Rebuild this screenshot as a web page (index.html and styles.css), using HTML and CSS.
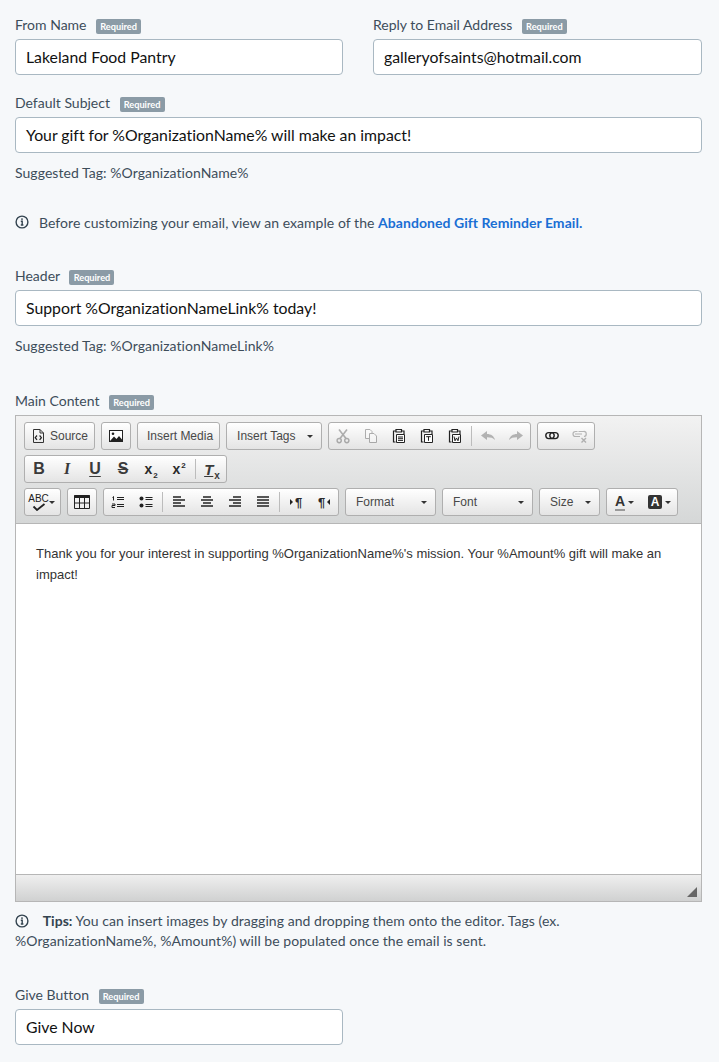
FILE: index.html
```html
<!DOCTYPE html>
<html lang="en">
<head>
    <meta charset="UTF-8">
    <meta name="viewport" content="width=device-width, initial-scale=1.0">
    <title>Abandoned Gift Reminder Email</title>
    <link rel="stylesheet" href="styles.css">
</head>
<body>
    <form class="email-form">
        <div class="form-row">
            <div class="form-group">
                <div class="field-label">From Name <span class="badge">Required</span></div>
                <div class="text-input">Lakeland Food Pantry</div>
            </div>
            <div class="form-group">
                <div class="field-label">Reply to Email Address <span class="badge">Required</span></div>
                <div class="text-input">galleryofsaints@hotmail.com</div>
            </div>
        </div>

        <div class="form-group subject-group">
            <div class="field-label">Default Subject <span class="badge">Required</span></div>
            <div class="text-input">Your gift for %OrganizationName% will make an impact!</div>
            <p class="hint">Suggested Tag: %OrganizationName%</p>
        </div>

        <p class="info-line">
            <svg class="info-icon" viewBox="0 0 14 14"><circle cx="7" cy="7" r="5.9"/><path d="M5.8 6.2H7.2V10M5.8 10H8.4"/><circle class="dot" cx="7" cy="4.1" r="0.9"/></svg>
            <span>Before customizing your email, view an example of the <a href="#">Abandoned Gift Reminder Email.</a></span>
        </p>

        <div class="form-group header-group">
            <div class="field-label">Header <span class="badge">Required</span></div>
            <div class="text-input">Support %OrganizationNameLink% today!</div>
            <p class="hint">Suggested Tag: %OrganizationNameLink%</p>
        </div>

        <div class="form-group content-group">
            <div class="field-label">Main Content <span class="badge">Required</span></div>
            <div class="editor">
                <div class="toolbar">
                    <div class="tool-row">
                        <div class="tool-group"><button type="button" class="tool text-tool source-tool">
                            <svg class="ico" viewBox="0 0 16 16"><path d="M3.5 1.5H10L13.5 5V14.5H3.5Z M10 1.5V5H13.5" fill="none" stroke="#333"/><path d="M7 7.5L5.2 9.7L7 11.9M9.6 7.5L11.4 9.7L9.6 11.9" fill="none" stroke="#222" stroke-width="1.2"/></svg>
                            Source</button></div>
                        <div class="tool-group"><button type="button" class="tool">
                            <svg class="ico" viewBox="0 0 16 16"><rect x="1.5" y="2.5" width="13" height="11" fill="#fff" stroke="#222"/><circle cx="5" cy="5.8" r="1.3" fill="#222"/><path d="M2 13L6 8.5L8.5 11L11 8L14 11.5V13Z" fill="#222"/></svg>
                        </button></div>
                        <div class="tool-group"><button type="button" class="tool text-tool wide-tool">Insert Media</button></div>
                        <div class="tool-group"><button type="button" class="tool combo tags-combo">Insert Tags <i class="caret"></i></button></div>
                        <div class="tool-group">
                            <button type="button" class="tool off"><svg class="ico" viewBox="0 0 16 16"><path d="M4 1.5L11 10.5M12 1.5L5 10.5" fill="none" stroke="#444" stroke-width="1.6"/><circle cx="4.2" cy="12.6" r="2.1" fill="none" stroke="#444" stroke-width="1.4"/><circle cx="11.8" cy="12.6" r="2.1" fill="none" stroke="#444" stroke-width="1.4"/></svg></button>
                            <button type="button" class="tool off"><svg class="ico" viewBox="0 0 16 16"><path d="M2.5 1.5H7L9 3.5V10.5H2.5Z" fill="#fff" stroke="#444"/><path d="M6.5 5.5H11L13.5 8V14.5H6.5Z" fill="#fff" stroke="#444"/></svg></button>
                            <button type="button" class="tool"><svg class="ico" viewBox="0 0 16 16"><use href="#clip"/><path d="M5.5 6.5H13.5V14.5H5.5Z M7 9H12M7 10.7H12M7 12.4H12" fill="#fff" stroke="#222"/></svg></button>
                            <button type="button" class="tool"><svg class="ico" viewBox="0 0 16 16"><use href="#clip"/><path d="M5.5 6.5H13.5V14.5H5.5Z M7.2 8.7H11.8M9.5 8.7V12.8" fill="#fff" stroke="#222"/></svg></button>
                            <button type="button" class="tool"><svg class="ico" viewBox="0 0 16 16"><use href="#clip"/><path d="M5.5 6.5H13.5V14.5H5.5Z M7 8.5L8 12.8L9.5 10L11 12.8L12 8.5" fill="#fff" stroke="#222"/></svg></button>
                            <i class="sep"></i>
                            <button type="button" class="tool off"><svg class="ico" viewBox="0 0 16 16"><path d="M1 7.5L7 3V6C11 6 14 8 15 12C13 10 11 9.3 7 9.3V12Z" fill="#555"/></svg></button>
                            <button type="button" class="tool off"><svg class="ico" viewBox="0 0 16 16"><path d="M15 7.5L9 3V6C5 6 2 8 1 12C3 10 5 9.3 9 9.3V12Z" fill="#555"/></svg></button>
                        </div>
                        <div class="tool-group">
                            <button type="button" class="tool"><svg class="ico" viewBox="0 0 16 16"><rect x="1.8" y="4.6" width="8.4" height="6" rx="3" fill="none" stroke="#222" stroke-width="1.4"/><rect x="5.8" y="4.6" width="8.4" height="6" rx="3" fill="none" stroke="#222" stroke-width="1.4"/></svg></button>
                            <button type="button" class="tool off"><svg class="ico" viewBox="0 0 16 16"><path d="M5.5 3.5H3.5A2.5 2.5 0 0 0 3.5 8.5H8M12 8.5A2.5 2.5 0 0 0 11.5 3.5H6.5M3 6H10" fill="none" stroke="#555" stroke-width="1.2"/><path d="M9.5 10L14 14.5M14 10L9.5 14.5" stroke="#555" stroke-width="1.4"/></svg></button>
                        </div>
                    </div>
                    <div class="tool-row">
                        <div class="tool-group">
                            <button type="button" class="tool glyph bold">B</button>
                            <button type="button" class="tool glyph italic">I</button>
                            <button type="button" class="tool glyph under">U</button>
                            <button type="button" class="tool glyph strike">S</button>
                            <button type="button" class="tool glyph script"><span>x<sub>2</sub></span></button>
                            <button type="button" class="tool glyph script"><span>x<sup>2</sup></span></button>
                            <i class="sep"></i>
                            <button type="button" class="tool glyph clear-format"><span><u>T</u><sub>x</sub></span></button>
                        </div>
                    </div>
                    <div class="tool-row">
                        <div class="tool-group"><button type="button" class="tool spell-tool">
                            <span class="spell-icon"><span class="abc">ABC</span><svg class="check" viewBox="0 0 14 8"><path d="M1.5 3.5L5 7L12.5 1" fill="none" stroke="#222" stroke-width="1.8"/></svg></span><i class="caret"></i>
                        </button></div>
                        <div class="tool-group"><button type="button" class="tool"><svg class="ico" viewBox="0 0 16 16"><path d="M0.5 1H15.5V4H0.5Z" fill="#222"/><path d="M0.5 1.5H15.5V14.5H0.5Z M0.5 9H15.5M5.5 4V14.5M10.5 4V14.5" fill="none" stroke="#222"/></svg></button></div>
                        <div class="tool-group">
                            <button type="button" class="tool"><svg class="ico" viewBox="0 0 16 16"><path d="M7 3.5H14M7 5.5H14M7 10.5H14M7 12.5H14" stroke="#222"/><path d="M3.5 2.5V6.5M2.5 3.5L3.5 2.5M2 10H5V11.5H2V13.5H5" fill="none" stroke="#222"/></svg></button>
                            <button type="button" class="tool"><svg class="ico" viewBox="0 0 16 16"><circle cx="3.5" cy="4.5" r="2" fill="#222"/><circle cx="3.5" cy="11.5" r="2" fill="#222"/><path d="M7.5 3.5H14.5M7.5 5.5H14.5M7.5 10.5H14.5M7.5 12.5H14.5" stroke="#222"/></svg></button>
                            <i class="sep"></i>
                            <button type="button" class="tool"><svg class="ico" viewBox="0 0 16 16"><path d="M2 3H10M2 6H14M2 9H10M2 12H14" stroke="#222" stroke-width="1.6"/></svg></button>
                            <button type="button" class="tool"><svg class="ico" viewBox="0 0 16 16"><path d="M4 3H12M2 6H14M4 9H12M2 12H14" stroke="#222" stroke-width="1.6"/></svg></button>
                            <button type="button" class="tool"><svg class="ico" viewBox="0 0 16 16"><path d="M6 3H14M2 6H14M6 9H14M2 12H14" stroke="#222" stroke-width="1.6"/></svg></button>
                            <button type="button" class="tool"><svg class="ico" viewBox="0 0 16 16"><path d="M2 3H14M2 6H14M2 9H14M2 12H14" stroke="#222" stroke-width="1.6"/></svg></button>
                            <i class="sep"></i>
                            <button type="button" class="tool bidi"><i class="arrow-right"></i>¶</button>
                            <button type="button" class="tool bidi">¶<i class="arrow-left"></i></button>
                        </div>
                        <div class="tool-group"><button type="button" class="tool combo format-combo">Format <i class="caret"></i></button></div>
                        <div class="tool-group"><button type="button" class="tool combo format-combo">Font <i class="caret"></i></button></div>
                        <div class="tool-group"><button type="button" class="tool combo size-combo">Size <i class="caret"></i></button></div>
                        <div class="tool-group">
                            <button type="button" class="tool color-tool"><span class="text-color">A</span><i class="caret"></i></button>
                            <button type="button" class="tool color-tool"><span class="back-color">A</span><i class="caret"></i></button>
                        </div>
                    </div>
                </div>
                <div class="editor-body">Thank you for your interest in supporting %OrganizationName%'s mission. Your %Amount% gift will make an impact!</div>
                <div class="editor-foot"><i class="resizer"></i></div>
            </div>
            <p class="tips">
                <svg class="info-icon" viewBox="0 0 14 14"><circle cx="7" cy="7" r="5.9"/><path d="M5.8 6.2H7.2V10M5.8 10H8.4"/><circle class="dot" cx="7" cy="4.1" r="0.9"/></svg>
                <strong>Tips:</strong> You can insert images by dragging and dropping them onto the editor. Tags (ex.<br>%OrganizationName%, %Amount%) will be populated once the email is sent.
            </p>
        </div>

        <div class="form-row">
            <div class="form-group">
                <div class="field-label">Give Button <span class="badge">Required</span></div>
                <div class="text-input">Give Now</div>
            </div>
            <div class="form-group"></div>
        </div>
    </form>

    <svg class="defs" width="0" height="0">
        <symbol id="clip" viewBox="0 0 16 16">
            <path d="M4.5 3H2.5V14H4.5M11 3H13V6M5 1.5H10.5V4H5Z" fill="none" stroke="#222" stroke-width="1.2"/>
        </symbol>
    </svg>
</body>
</html>
```

FILE: styles.css
```css
* {
    box-sizing: border-box;
}

body {
    font-family: Lato, "Open Sans", sans-serif;
    font-size: 14px;
    font-variant-ligatures: none;
    letter-spacing: 0.05px;
    color: #3d4d5a;
    background-color: #f6f8fa;
    margin: 0;
    padding: 15px 17px 16px 15px;
}

p {
    margin: 0;
}

.form-row {
    display: grid;
    grid-template-columns: 328px 329px;
    gap: 30px;
}

.field-label {
    height: 24px;
    line-height: 20px;
    font-size: 14px;
    letter-spacing: 0;
    white-space: nowrap;
}

.badge {
    display: inline-block;
    width: 45px;
    margin-left: 6px;
    height: 15px;
    line-height: 15px;
    font-size: 9.2px;
    font-weight: 700;
    text-align: center;
    color: #fff;
    background-color: #8b9ba6;
    border-radius: 2px;
}

.text-input {
    height: 36px;
    line-height: 34px;
    padding: 0 10px;
    font-size: 15.8px;
    letter-spacing: 0;
    color: #111;
    background-color: #fff;
    border: 1px solid #a9b8c2;
    border-radius: 4px;
}

.subject-group {
    margin-top: 18px;
}

.hint {
    margin-top: 11px;
    line-height: 18px;
}

.info-line {
    display: flex;
    align-items: center;
    gap: 10px;
    margin-top: 30px;
    height: 20px;
}

.info-line a {
    color: #1a6fd4;
    font-weight: 700;
    text-decoration: none;
}

.info-icon {
    width: 14px;
    height: 14px;
    flex: none;
    fill: none;
    stroke: #33434f;
    stroke-width: 1.4;
}

.info-icon .dot {
    fill: #33434f;
    stroke: none;
}

.header-group {
    margin-top: 34px;
}

.content-group {
    margin-top: 36px;
}

.editor {
    border: 1px solid #b6b6b6;
    background-color: #fff;
}

.toolbar {
    display: flex;
    flex-direction: column;
    gap: 5px;
    height: 108px;
    padding: 6px 8px 0;
    background: linear-gradient(to bottom, #f2f2f2, #d5d7d7);
    border-bottom: 1px solid #b6b6b6;
}

.tool-row {
    display: flex;
    gap: 6px;
    height: 28px;
}

.tool-group {
    display: flex;
    align-items: center;
    height: 28px;
    padding: 0;
    background: linear-gradient(to bottom, #fff, #e4e4e4);
    border: 1px solid #afafaf;
    border-radius: 3px;
}

.tool {
    display: flex;
    align-items: center;
    justify-content: center;
    width: 28px;
    height: 26px;
    padding: 0;
    font-family: "Liberation Sans", Arial, sans-serif;
    font-size: 12px;
    letter-spacing: 0;
    color: #484848;
    background: none;
    border: none;
}

.ico {
    width: 16px;
    height: 16px;
    display: block;
}

.off .ico {
    opacity: 0.4;
}

.text-tool {
    width: auto;
    gap: 4px;
}

.wide-tool {
    padding: 0 6px 0 9px;
}

.source-tool {
    padding: 0 6px 0 5px;
}

.sep {
    width: 1px;
    height: 20px;
    background-color: #bcbcbc;
    margin: 0 2px;
}

.caret {
    display: inline-block;
    width: 0;
    height: 0;
    border-top: 3px solid #333;
    border-left: 3px solid transparent;
    border-right: 3px solid transparent;
}

.combo {
    justify-content: space-between;
    padding: 0 8px 0 10px;
}

.tags-combo {
    width: 94px;
}

.format-combo {
    width: 89px;
}

.size-combo {
    width: 59px;
}

.glyph {
    font-size: 16px;
    font-weight: 700;
    color: #3a3a3a;
    line-height: 1;
}

.italic {
    font-style: italic;
    font-family: "Liberation Serif", serif;
}

.under {
    text-decoration: underline;
    text-underline-offset: 2px;
}

.strike {
    text-decoration: line-through;
}

.script {
    font-size: 14px;
    color: #2a2a2a;
}

.script sub,
.script sup,
.clear-format sub {
    font-size: 8px;
    line-height: 0;
    margin-left: 1px;
}

.clear-format {
    font-style: italic;
    font-size: 15px;
}

.clear-format sub {
    font-size: 10px;
    font-style: normal;
}

.bidi {
    gap: 2px;
    font-size: 13px;
    font-weight: 700;
    color: #2a2a2a;
}

.arrow-right,
.arrow-left {
    width: 0;
    height: 0;
    border-top: 3px solid transparent;
    border-bottom: 3px solid transparent;
}

.arrow-right {
    border-left: 3px solid #222;
}

.arrow-left {
    border-right: 3px solid #222;
}

.spell-tool {
    width: 35px;
    gap: 2px;
}

.spell-icon {
    display: flex;
    flex-direction: column;
    align-items: center;
    width: 16px;
}

.abc {
    font-family: "Liberation Sans Narrow", "Liberation Sans", sans-serif;
    font-size: 10px;
    line-height: 9px;
    color: #222;
}

.check {
    width: 14px;
    height: 8px;
}

.color-tool {
    width: 35px;
    gap: 3px;
}

.text-color {
    font-weight: 700;
    font-size: 14px;
    line-height: 15px;
    color: #333;
    border-bottom: 2px solid #999;
}

.back-color {
    font-weight: 700;
    font-size: 12px;
    line-height: 14px;
    width: 14px;
    text-align: center;
    color: #fff;
    background-color: #333;
    border-radius: 2px;
}

.editor-body {
    height: 350px;
    padding: 19px 20px;
    font-family: "Liberation Sans", Arial, sans-serif;
    font-size: 13px;
    letter-spacing: 0;
    line-height: 21px;
    color: #333;
}

.editor-foot {
    display: flex;
    justify-content: flex-end;
    align-items: flex-end;
    height: 27px;
    padding: 0 4px 4px 0;
    background: linear-gradient(to bottom, #efefef, #d0d1d1);
    border-top: 1px solid #b6b6b6;
}

.resizer {
    width: 0;
    height: 0;
    border-bottom: 10px solid #666;
    border-left: 10px solid transparent;
}

.tips {
    margin-top: 9px;
    line-height: 20px;
}

.tips .info-icon {
    vertical-align: -2px;
    margin-right: 10px;
}

.tips strong {
    color: #33434f;
}

.content-group + .form-row {
    margin-top: 34px;
}

.defs {
    position: absolute;
}
```
